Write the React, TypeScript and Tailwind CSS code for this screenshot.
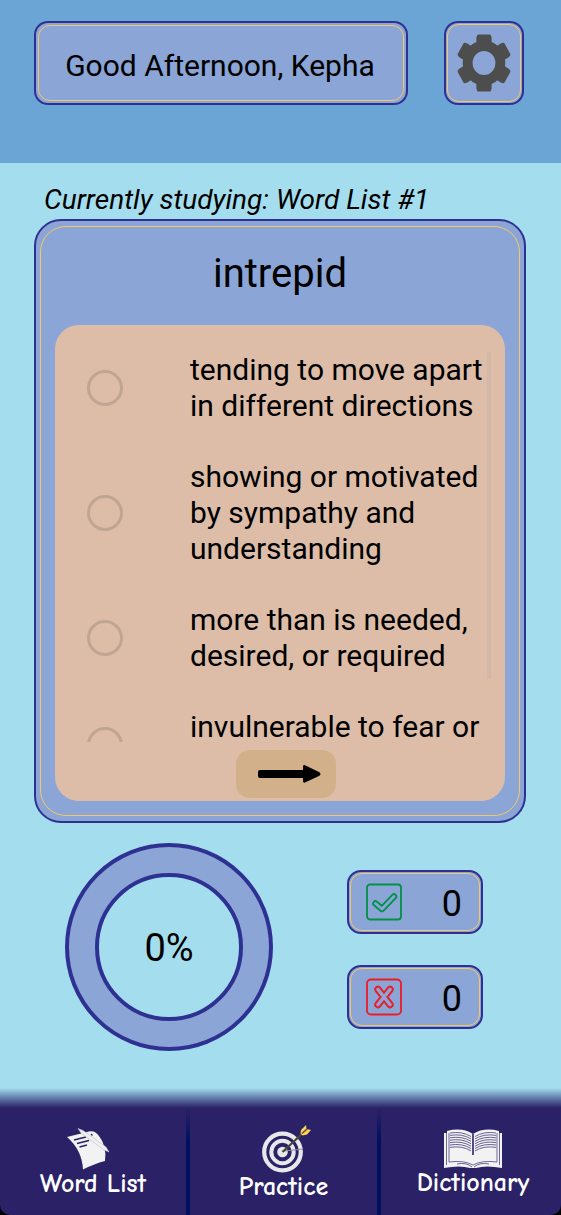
import React, { useState } from "react";

const definitions = [
  "tending to move apart in different directions",
  "showing or motivated by sympathy and understanding",
  "more than is needed, desired, or required",
  "invulnerable to fear or intimidation",
];

function GearIcon() {
  return (
    <svg viewBox="0 0 54 58" className="h-[58px] w-[54px]" fill="#4d4d4d" aria-hidden="true">
      <g transform="translate(27 29) scale(0.95 1)">
        {[0, 60, 120, 180, 240, 300].map((angle) => (
          <path
            key={angle}
            transform={`rotate(${angle})`}
            d="M-8 -16 V-25.5 L-7.5 -27 Q-7.2 -28.5 -5.8 -28.5 H5.8 Q7.2 -28.5 7.5 -27 L8 -25.5 V-16 Z"
          />
        ))}
        <circle r="17.2" fill="none" stroke="#4d4d4d" strokeWidth="10.4" />
      </g>
    </svg>
  );
}

function CheckIcon() {
  const d = "M9.500 20.500 L16 26 L28 13.500";
  return (
    <svg viewBox="0 0 36 38" className="h-[38px] w-9" fill="none" strokeLinecap="round" strokeLinejoin="round" aria-hidden="true">
      <rect x="1" y="1.500" width="34" height="35" rx="3" stroke="#009245" strokeWidth="1.8" />
      <path d={d} stroke="#009245" strokeWidth="6.4" />
      <path d={d} stroke="#8aa5d6" strokeWidth="2.8" />
    </svg>
  );
}

function CrossIcon() {
  const d = "M12 11.500 L24 26.500 M24 11.500 L12 26.500";
  return (
    <svg viewBox="0 0 36 38" className="h-[38px] w-9" fill="none" strokeLinecap="round" strokeLinejoin="round" aria-hidden="true">
      <rect x="1" y="1.500" width="34" height="35" rx="4" stroke="#ed1c24" strokeWidth="1.8" />
      <path d={d} stroke="#ed1c24" strokeWidth="7.4" />
      <path d={d} stroke="#8aa5d6" strokeWidth="3.6" />
    </svg>
  );
}

function ArrowIcon() {
  return (
    <svg viewBox="0 0 64 20" className="h-5 w-16" aria-hidden="true">
      <path
        d="M2 6 H45 V2.5 Q45 0.5 47 1.2 L61 8 Q64 10 61 12 L47 18.6 Q45 19.2 45 17 V14 H2 Q0 14 0 12 V8 Q0 6 2 6 Z"
        fill="#000"
      />
    </svg>
  );
}

function PageIcon() {
  return (
    <svg viewBox="0 0 44 42" className="mr-2 h-[42px] w-11" aria-hidden="true">
      <path d="M0 9 Q12 6 22 3.500 Q28 2 32 8 Q40 18 38 33 Q29 35 16 41.500 Q15 22 0 9 Z" fill="#f2f2f2" />
      <path d="M7 12 L19 9 M10 15.500 L22 12.500 M12.500 19 L20 17" stroke="#2b2166" strokeWidth="1.6" fill="none" />
      <path d="M11 0.500 L16 2.500 L39 19 L42 24 L37 22 L14 5 Z" fill="#f0f0f0" stroke="#bcb9c6" strokeWidth="0.6" />
      <path d="M24 6 L25.500 7.500" stroke="#2b2166" strokeWidth="1.2" />
    </svg>
  );
}

function TargetIcon() {
  return (
    <svg viewBox="0 0 52 48" className="ml-[6px] h-12 w-[52px]" fill="none" aria-hidden="true">
      <circle cx="21.500" cy="27" r="18.300" stroke="#e8e8ea" strokeWidth="4.2" />
      <circle cx="21.500" cy="27" r="11.200" stroke="#e8e8ea" strokeWidth="4" />
      <circle cx="21.500" cy="27" r="5.300" fill="#e8e8ea" />
      <path d="M23 26 L42 24" stroke="#8b879f" strokeWidth="1" />
      <path d="M21.500 27 L44 6" stroke="#45453f" strokeWidth="2.2" />
      <path d="M40 5 L45 0 L45.500 4 L50 5 L46 9.500 L41.500 10.500 L39.500 8.500 Z" fill="#ffd35c" />
      <path d="M41 8.500 L46 4" stroke="#5c5038" strokeWidth="1.6" />
    </svg>
  );
}

function BookIcon() {
  const rows = [0, 1, 2, 3, 4, 5, 6];
  return (
    <svg viewBox="0 0 58 40" className="h-10 w-[58px]" fill="none" aria-hidden="true">
      <path d="M0 4 H3 V2 Q18 -2 29 5 Q40 -2 55 2 V4 H58 V39 Q42 36 32 39 H26 Q16 36 0 39 Z" fill="#f2f2f3" />
      <path d="M2.500 4 V36 M55.500 4 V36 M5 4 V33 Q20 31 29 36 Q38 31 53 33 V4" stroke="#62598d" strokeWidth="0.9" />
      {rows.map((row) => (
        <path
          key={row}
          transform={`translate(0 ${row * 2.4})`}
          d="M6 4 Q18 2 27 7.500 M31 7.500 Q40 2 52 4"
          stroke="#5a5088"
          strokeWidth="0.9"
        />
      ))}
      <path d="M29 5 V26" stroke="#2b2166" strokeWidth="1.6" />
      <path d="M13 35 Q22 33 28 38 M45 35 Q36 33 30 38" stroke="#4a407c" strokeWidth="0.8" />
    </svg>
  );
}

function Score({ icon, label, value }: { icon: React.ReactNode; label: string; value: number }) {
  return (
    <div
      role="group"
      aria-label={label}
      className="h-16 w-[136px] rounded-[14px] border-2 border-[#2e3192] bg-[#8aa5d6] p-px"
    >
      <div className="flex h-full items-center justify-between rounded-xl border border-[#f6c768] pr-[17px] pl-[15px]">
        {icon}
        <span className="pt-1 text-[36px] leading-10">{value}</span>
      </div>
    </div>
  );
}

function NavItem({ icon, label, spacing }: { icon: React.ReactNode; label: string; spacing: string }) {
  return (
    <a href="#" className={`flex flex-col items-center justify-end text-white ${spacing}`}>
      {icon}
      <span className="font-['Comic_Neue','Comic_Sans_MS',Lato,sans-serif] text-[26px] leading-7 font-bold whitespace-nowrap">
        {label}
      </span>
    </a>
  );
}

function Divider() {
  return <div className="bg-linear-to-b from-transparent to-[#00115f] to-30%" />;
}

export default function App() {
  const [choice, setChoice] = useState<number | null>(null);

  return (
    <div className="flex min-h-screen flex-col bg-[#a4deee] font-[Roboto,sans-serif] text-black">
      <header className="flex h-[163px] items-start justify-between bg-[#6ba5d6] pt-[21px] pr-[37px] pl-[34px]">
        <div className="h-[84px] w-[374px] rounded-[14px] border-2 border-[#2e3192] bg-[#8aa5d6] p-[2px]">
          <h1 className="flex h-full items-center justify-center rounded-xl border border-[#f6c768] pt-[6px] pr-[2px] text-[30px] leading-9 whitespace-nowrap">
            Good Afternoon, Kepha
          </h1>
        </div>
        <button
          type="button"
          aria-label="Settings"
          className="h-[84px] w-20 rounded-[14px] border-2 border-[#2e3192] bg-[#8aa5d6] p-px"
        >
          <span className="flex h-full items-center justify-center rounded-xl border border-[#f6c768]">
            <GearIcon />
          </span>
        </button>
      </header>

      <main className="flex flex-1 flex-col pr-[35px] pl-[34px]">
        <p className="mt-[19px] pl-[10px] text-[28px] leading-9 whitespace-nowrap italic">
          Currently studying: Word List #1
        </p>

        <section className="mt-px rounded-[27px] border-2 border-[#2e3192] bg-[#8aa5d6] px-1 py-[5px]">
          <div className="rounded-[26px] border border-[#f6c768] px-[14px] pb-[14px]">
            <h2 className="pt-[23px] text-center text-[40px] leading-12">intrepid</h2>
            <div className="mt-[27px] flex flex-col items-center rounded-3xl bg-[#ddbda8] pt-[27px] pb-[3px]">
              <div className="relative w-full">
                <ul className="flex h-[390px] flex-col gap-[35px] overflow-y-auto [scrollbar-width:none]">
                  {definitions.map((definition, i) => (
                    <li key={definition} className="shrink-0 pr-5 pl-8">
                      <label className="flex items-center gap-[67px] text-[30px] leading-9">
                        <input
                          type="radio"
                          name="definition"
                          checked={choice === i}
                          onChange={() => setChoice(i)}
                          className="size-9 shrink-0 appearance-none rounded-full border-3 border-[#c1a593] checked:border-[#2e3192]"
                        />
                        {definition}
                      </label>
                    </li>
                  ))}
                </ul>
                <div className="absolute top-0 right-[14px] h-[327px] w-1 bg-[#d3b8a8]" />
              </div>
              <button
                type="button"
                aria-label="Next word"
                className="mt-2 ml-3 flex h-12 w-[100px] items-center justify-center rounded-[14px] bg-[#d2b18a] pl-2"
              >
                <ArrowIcon />
              </button>
            </div>
          </div>
        </section>

        <section className="mt-5 flex items-center justify-between pr-[43px] pb-9 pl-[31px]">
          <div className="size-[208px] rounded-full border-4 border-[#2e3192] bg-[#8aa5d6] p-[26px]">
            <div className="flex size-full items-center justify-center rounded-full border-4 border-[#2e3192] bg-[#a4deee] pt-[2px] text-[38px]">
              0%
            </div>
          </div>
          <div className="flex flex-col gap-[31px] pt-1">
            <Score icon={<CheckIcon />} label="Correct" value={0} />
            <Score icon={<CrossIcon />} label="Incorrect" value={0} />
          </div>
        </section>
      </main>

      <footer className="bg-black">
        <div className="h-5 bg-linear-to-b from-[#a4deee] to-[#2b2166]" />
        <nav className="grid h-[107px] grid-cols-[186fr_4px_187fr_4px_180fr] rounded-b-[10px] bg-[#2b2166]">
          <NavItem icon={<PageIcon />} label="Word List" spacing="pb-[17px]" />
          <Divider />
          <NavItem icon={<TargetIcon />} label="Practice" spacing="pb-[14px]" />
          <Divider />
          <NavItem icon={<BookIcon />} label="Dictionary" spacing="pb-[18px] pl-1" />
        </nav>
      </footer>
    </div>
  );
}
